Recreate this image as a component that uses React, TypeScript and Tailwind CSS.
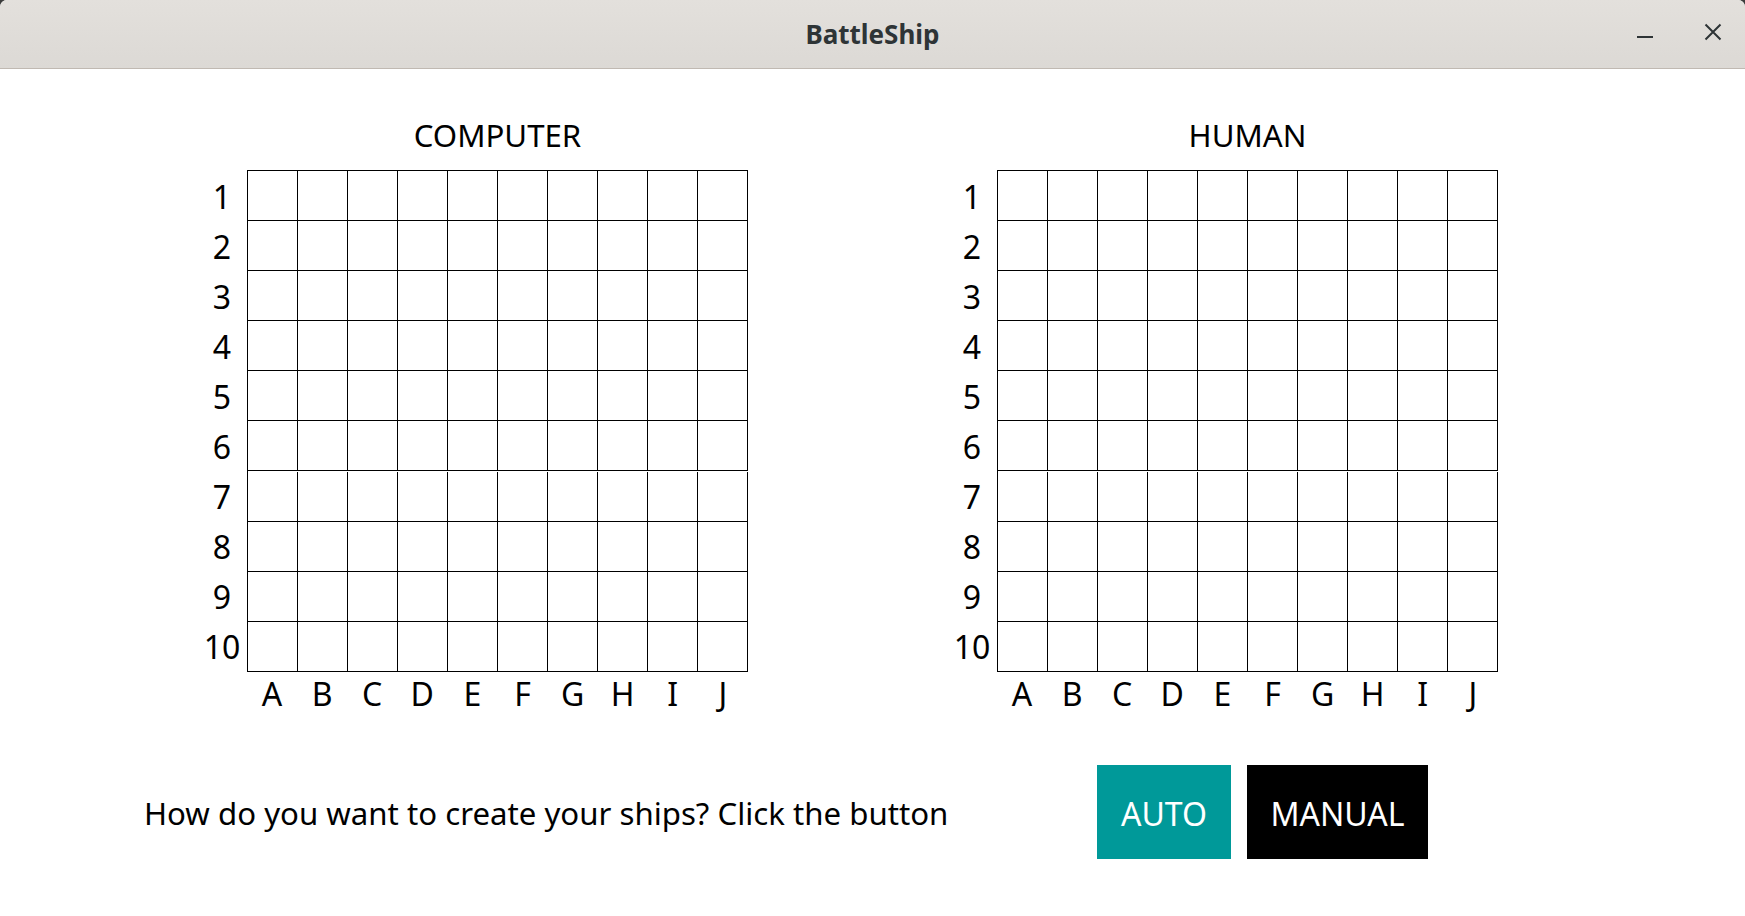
import React from "react";

const ROWS = [1, 2, 3, 4, 5, 6, 7, 8, 9, 10];
const COLS = ["A", "B", "C", "D", "E", "F", "G", "H", "I", "J"];

function Board({ title }: { title: string }) {
  return (
    <div className="flex flex-col w-[551px]">
      <div className="ml-[50px] w-[501px] text-center text-[31.2px] leading-[40px] text-black">
        {title}
      </div>
      <div className="mt-[15px] flex">
        <div className="flex flex-col w-[50px] pt-[2px]">
          {ROWS.map((r) => (
            <div
              key={r}
              className="h-[50px] leading-[50px] text-center text-[32px] text-black"
            >
              {r}
            </div>
          ))}
        </div>
        <div className="grid grid-cols-10 border-l border-t border-black w-[501px]">
          {ROWS.map((r) =>
            COLS.map((c) => (
              <div
                key={`${r}-${c}`}
                className="w-[50px] h-[50px] border-r border-b border-black bg-white"
              />
            ))
          )}
        </div>
      </div>
      <div className="ml-[50px] mt-[2px] grid grid-cols-10 w-[501px]">
        {COLS.map((c) => (
          <div key={c} className="w-[50px] text-center text-[32px] leading-[40px] text-black">
            {c}
          </div>
        ))}
      </div>
    </div>
  );
}

export default function App() {
  return (
    <div
      className="w-[1745px] h-[916px] bg-[#3c3c3c] overflow-hidden"
      style={{ fontFamily: '"Noto Sans", "Open Sans", sans-serif' }}
    >
      <div className="w-full h-full bg-white rounded-t-[7px] overflow-hidden flex flex-col">
        <div className="relative h-[69px] border-b border-[#c0b9b2] bg-gradient-to-b from-[#e3e0dc] to-[#dcd9d5] flex items-center justify-center">
          <span className="text-[26px] font-bold text-[#2e3436] leading-[30px] mt-[0px]">
            BattleShip
          </span>
          <div className="absolute right-0 top-0 h-full flex items-start">
            <svg
              className="absolute left-[-110px] top-[28px]"
              width="20"
              height="20"
              viewBox="0 0 20 20"
            >
              <line x1="2" y1="9" x2="18" y2="9" stroke="#2e3436" strokeWidth="2" />
            </svg>
            <svg
              className="absolute left-[-42px] top-[22px]"
              width="20"
              height="20"
              viewBox="0 0 20 20"
            >
              <path d="M2.5 2.5 L17.5 17.5 M17.5 2.5 L2.5 17.5" stroke="#2e3436" strokeWidth="2" />
            </svg>
          </div>
        </div>

        <div className="flex flex-col">
          <div className="flex pt-[46px] pl-[197px] gap-[199px]">
            <Board title="COMPUTER" />
            <Board title="HUMAN" />
          </div>

          <div className="flex items-center mt-[51px]">
            <div className="w-[1097px] pl-[144px] pt-[2px] text-[31.2px] leading-[40px] text-black whitespace-nowrap">
              How do you want to create your ships? Click the button
            </div>
            <div className="flex gap-[16px]">
              <button className="h-[94px] w-[134px] bg-[#009999] text-white text-[32px] leading-[40px] pt-[4px] flex items-center justify-center">
                AUTO
              </button>
              <button className="h-[94px] w-[181px] bg-black text-white text-[32px] leading-[40px] pt-[4px] flex items-center justify-center">
                MANUAL
              </button>
            </div>
          </div>
        </div>
      </div>
    </div>
  );
}
